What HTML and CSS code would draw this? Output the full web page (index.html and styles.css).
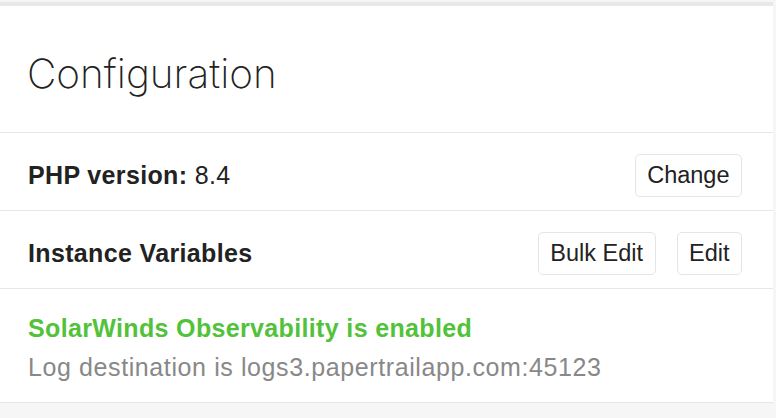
FILE: index.html
```html
<!DOCTYPE html>
<html lang="en">
<head>
    <meta charset="UTF-8">
    <meta name="viewport" content="width=device-width, initial-scale=1.0">
    <title>Configuration</title>
    <link rel="stylesheet" href="styles.css">
</head>
<body>
    <div class="panel">
        <!-- Заголовок -->
        <div class="panel-header">
            <h2 class="panel-title">Configuration</h2>
        </div>

        <!-- Версия PHP -->
        <div class="row">
            <div class="row-label"><strong>PHP version:</strong> 8.4</div>
            <div class="actions">
                <button class="btn" type="button">Change</button>
            </div>
        </div>

        <!-- Переменные -->
        <div class="row">
            <div class="row-label"><strong>Instance Variables</strong></div>
            <div class="actions">
                <button class="btn" type="button">Bulk Edit</button>
                <button class="btn" type="button">Edit</button>
            </div>
        </div>

        <!-- Логи -->
        <div class="row row-status">
            <div class="status-ok">SolarWinds Observability is enabled</div>
            <div class="status-note">Log destination is logs3.papertrailapp.com:45123</div>
        </div>
    </div>
</body>
</html>
```

FILE: styles.css
```css
body {
    font-family: "Liberation Sans", Arial, sans-serif;
    margin: 0;
    padding-top: 2px;
    background-color: #f6f6f6;
    color: #222;
}
.panel {
    width: 773px;
    background-color: #ffffff;
    border-top: 4px solid #e6e8ea;
}
.panel-header {
    height: 127px;
    display: flex;
    align-items: center;
    padding: 8px 28px 0 27px;
    border-bottom: 1px solid #e5e8e8;
    box-sizing: border-box;
}
.panel-title {
    margin: 0;
    font-family: Inter, "Liberation Sans", sans-serif;
    font-weight: 200;
    font-size: 40.5px;
    color: #222;
    letter-spacing: 0;
}
.row {
    display: flex;
    align-items: center;
    justify-content: space-between;
    min-height: 78px;
    padding: 8px 31px 0 28px;
    border-bottom: 1px solid #e5e8e8;
    box-sizing: border-box;
    font-size: 25px;
    letter-spacing: 0.35px;
}
.row-label strong {
    font-weight: bold;
}
.actions {
    display: flex;
    gap: 21px;
}
.btn {
    font-family: "Liberation Sans", Arial, sans-serif;
    font-size: 23.5px;
    color: #222;
    background-color: #fff;
    border: 1px solid #e3e6e6;
    border-radius: 5px;
    height: 43px;
    padding: 0 11.5px;
    cursor: pointer;
}
.row-status {
    display: block;
    min-height: 114px;
    padding-top: 21px;
}
.status-ok {
    color: #52c23a;
    font-weight: bold;
    line-height: 36px;
}
.status-note {
    color: #888;
    line-height: 36px;
    margin-top: 3px;
    letter-spacing: 0.6px;
}
```
